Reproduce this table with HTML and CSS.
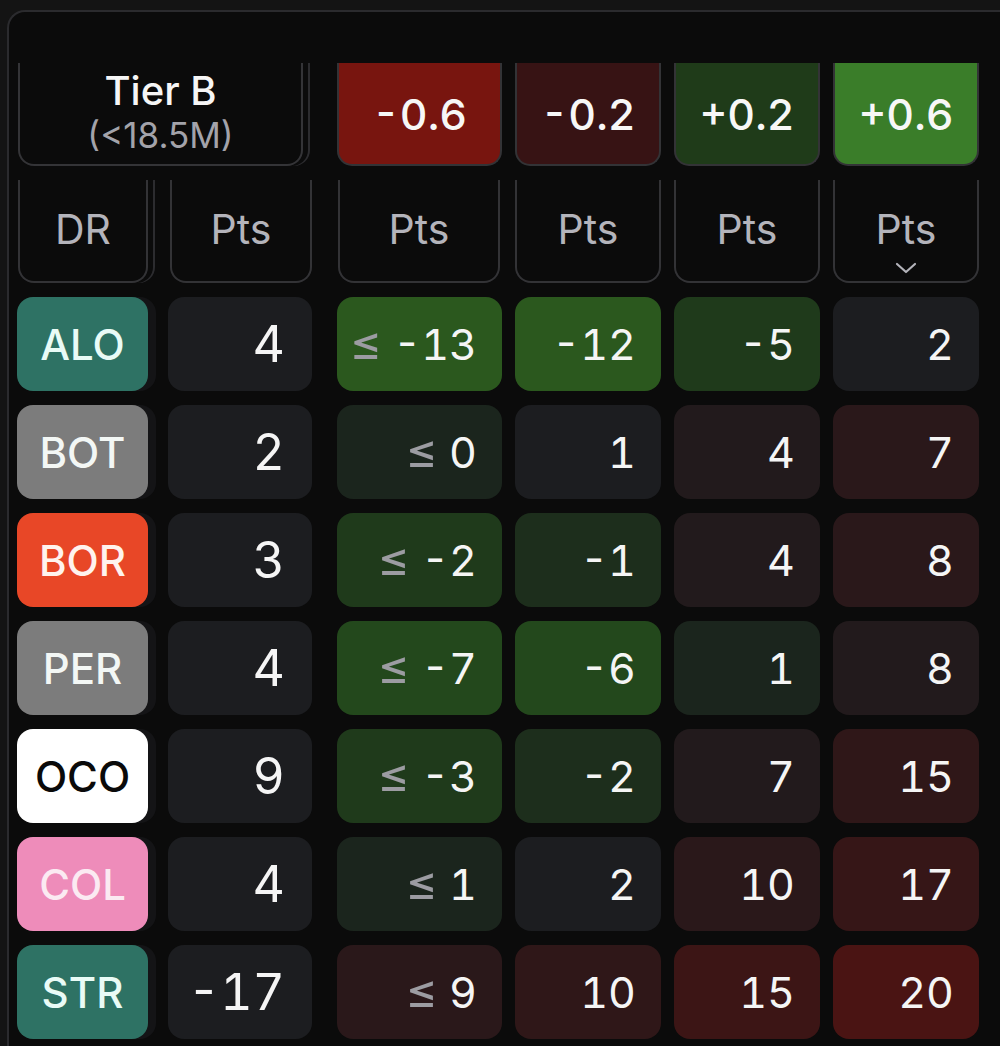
FILE: index.html
```html
<!DOCTYPE html>
<html lang="en">
<head>
<meta charset="utf-8">
<title>Tier B points</title>
<link rel="stylesheet" href="styles.css">
</head>
<body>
<div class="card">
  <div class="grid">
    <div class="tier"><span class="tier-name">Tier B</span><span class="tier-sub">(&lt;18.5M)</span></div>
    <div class="tile col3 t-n2">-0.6</div>
    <div class="tile t-n1">-0.2</div>
    <div class="tile t-p1">+0.2</div>
    <div class="tile t-p2">+0.6</div>

    <div class="hcell dr">DR</div>
    <div class="hcell col2">Pts</div>
    <div class="hcell col3">Pts</div>
    <div class="hcell">Pts</div>
    <div class="hcell">Pts</div>
    <div class="hcell sorted">Pts<svg class="chev" viewBox="0 0 22 12" width="22" height="12"><path d="M2 2 L11 10 L20 2" fill="none" stroke="#b3b3ba" stroke-width="2.2" stroke-linecap="round" stroke-linejoin="round"/></svg></div>

    <div class="badge b-alo">ALO</div>
    <div class="cell pts col2 n">4</div>
    <div class="cell col3 g5"><span class="le">≤</span> -13</div>
    <div class="cell g5">-12</div>
    <div class="cell g3">-5</div>
    <div class="cell n">2</div>

    <div class="badge b-bot">BOT</div>
    <div class="cell pts col2 n">2</div>
    <div class="cell col3 g1"><span class="le">≤</span> 0</div>
    <div class="cell n">1</div>
    <div class="cell r1">4</div>
    <div class="cell r2">7</div>

    <div class="badge b-bor">BOR</div>
    <div class="cell pts col2 n">3</div>
    <div class="cell col3 g3"><span class="le">≤</span> -2</div>
    <div class="cell g2">-1</div>
    <div class="cell r1">4</div>
    <div class="cell r2">8</div>

    <div class="badge b-per">PER</div>
    <div class="cell pts col2 n">4</div>
    <div class="cell col3 g4"><span class="le">≤</span> -7</div>
    <div class="cell g4">-6</div>
    <div class="cell g1">1</div>
    <div class="cell r1">8</div>

    <div class="badge b-oco">OCO</div>
    <div class="cell pts col2 n">9</div>
    <div class="cell col3 g3"><span class="le">≤</span> -3</div>
    <div class="cell g2">-2</div>
    <div class="cell r1">7</div>
    <div class="cell r3">15</div>

    <div class="badge b-col">COL</div>
    <div class="cell pts col2 n">4</div>
    <div class="cell col3 g1"><span class="le">≤</span> 1</div>
    <div class="cell n">2</div>
    <div class="cell r2">10</div>
    <div class="cell r4">17</div>

    <div class="badge b-str">STR</div>
    <div class="cell pts col2 n">-17</div>
    <div class="cell col3 r2"><span class="le">≤</span> 9</div>
    <div class="cell r3">10</div>
    <div class="cell r5">15</div>
    <div class="cell r6">20</div>
  </div>
</div>
</body>
</html>
```

FILE: styles.css
```css
html, body {
  margin: 0;
  padding: 0;
}
body {
  width: 1000px;
  height: 1046px;
  overflow: hidden;
  background: #141414;
  font-family: Inter, "Noto Sans", "Liberation Sans", sans-serif;
  color: #f4f4f4;
}
.card {
  margin: 10px 0 0 7px;
  height: 1036px;
  box-sizing: border-box;
  background: #0b0b0b;
  border-top: 2px solid #2b2b2e;
  border-left: 2px solid #2b2b2e;
  border-top-left-radius: 18px;
  padding: 51px 0 0 8px;
}
.grid {
  display: grid;
  grid-template-columns: 131px 151px 177px 146px 146px 146px;
  grid-template-rows: 103px 103px repeat(7, 94px);
  column-gap: 13px;
  row-gap: 14px;
}
.col2 { margin-left: 7px; }
.col3 { margin-left: 12px; }

/* header row 1 */
.tier {
  grid-column: 1 / span 2;
  margin-right: 9px;
  margin-left: 1px;
  border: 2px solid #343437;
  border-top: none;
  border-radius: 0 0 16px 16px;
  background: #0b0b0b;
  box-shadow: 5px 0 0 0 #0b0b0b, 7px 0 0 0 #2c2c2f;
  display: flex;
  flex-direction: column;
  align-items: center;
  justify-content: center;
  padding-bottom: 4px;
}
.tier-name {
  font-size: 40px;
  font-weight: 500;
  line-height: 46px;
  color: #f6f6f6;
}
.tier-sub {
  font-size: 35px;
  line-height: 42px;
  color: #a3a3aa;
}
.tile {
  border: 2px solid #333336;
  border-top: none;
  border-radius: 0 0 15px 15px;
  display: flex;
  align-items: center;
  justify-content: center;
  font-size: 43px;
  font-weight: 500;
  color: #f7f7f7;
  font-variant-numeric: tabular-nums;
}
.t-n2 { background: #78150f; }
.t-n1 { background: #371314; }
.t-p1 { background: #1f3b19; }
.t-p2 { background: #3a7d29; }

/* header row 2 */
.hcell {
  position: relative;
  border: 2px solid #333336;
  border-top: none;
  border-radius: 0 0 16px 16px;
  background: #0b0b0b;
  display: flex;
  align-items: center;
  justify-content: center;
  font-size: 41px;
  color: #b4b4bb;
  padding-bottom: 4px;
}
.hcell.dr {
  margin-left: 1px;
  box-shadow: 5px 0 0 0 #0b0b0b, 7px 0 0 0 #2c2c2f;
}
.hcell.col2 { margin-left: 9px; }
.hcell.col3 { margin-left: 13px; margin-right: 2px; }
.chev {
  position: absolute;
  left: 50%;
  bottom: 7px;
  transform: translateX(-50%);
}

/* badges */
.badge {
  border-radius: 16px;
  display: flex;
  align-items: center;
  justify-content: center;
  font-size: 42px;
  font-weight: 500;
  color: #f3f7f5;
  box-shadow: 8px 0 0 0 #141416;
}
.b-alo, .b-str { background: #2e7264; color: #e9fbf6; }
.b-bot, .b-per { background: #7c7c7c; }
.b-bor { background: #e84727; color: #fff3ee; }
.b-oco { background: #ffffff; color: #0a0a0a; }
.b-col { background: #ee8cba; color: #fbeaf2; }

/* value cells */
.cell {
  border-radius: 16px;
  display: flex;
  align-items: center;
  justify-content: flex-end;
  padding-right: 25px;
  font-size: 43px;
  font-weight: 400;
  color: #f5f5f5;
  font-variant-numeric: tabular-nums;
  white-space: pre;
}
.cell.pts { font-size: 50px; padding-right: 27px; }
.le { color: #9c9ca2; font-size: 1.15em; line-height: 1; }

.n  { background: #1c1d20; }
.g1 { background: #1b251d; }
.g2 { background: #1d2e1c; }
.g3 { background: #1f3a1b; }
.g4 { background: #23481c; }
.g5 { background: #2b581e; }
.r1 { background: #221a1c; }
.r2 { background: #2a181a; }
.r3 { background: #2f1718; }
.r4 { background: #361617; }
.r5 { background: #3c1515; }
.r6 { background: #4a1413; }
```
